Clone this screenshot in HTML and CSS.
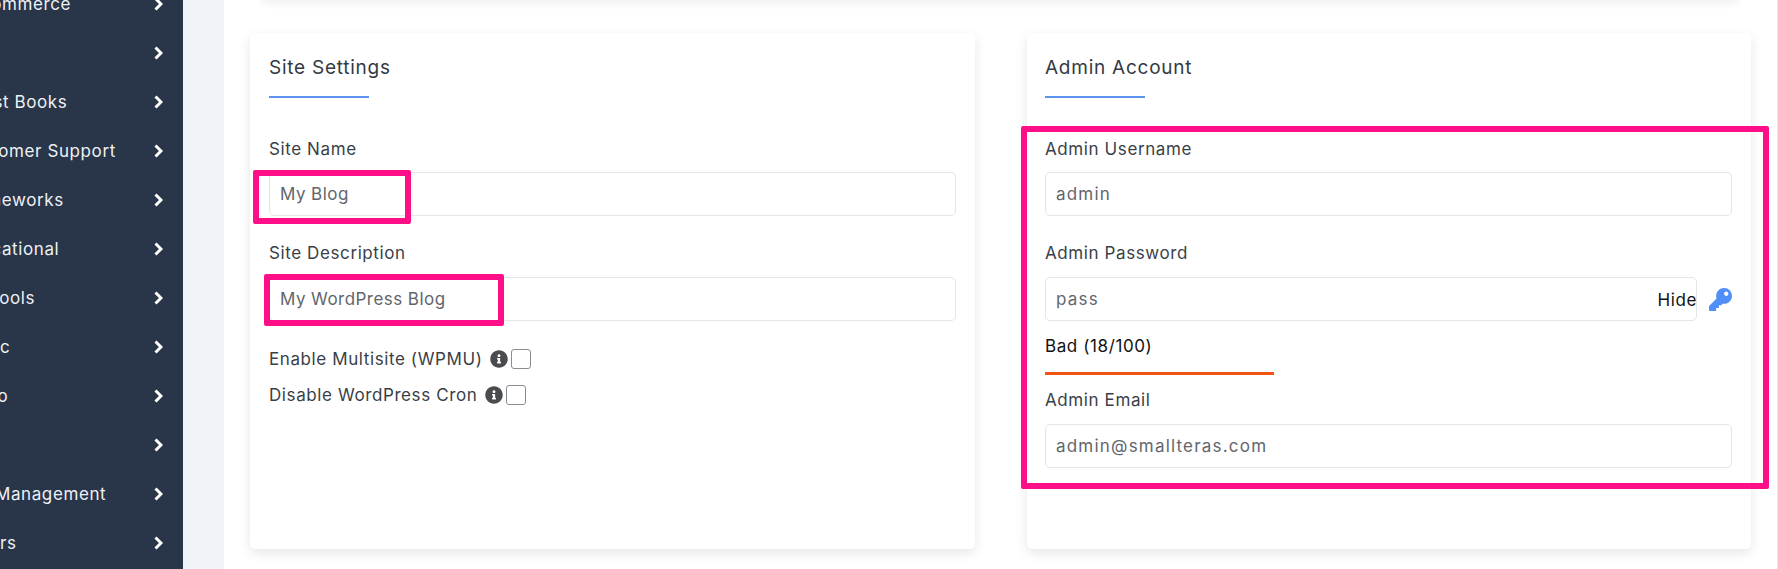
FILE: index.html
```html
<html>

<head>
  <meta charset="utf8">
  <title>Install WordPress</title>
  <link rel="stylesheet" href="styles.css">
</head>

<body>
  <nav class="sidebar">
    <ul>
      <li><span>E-Commerce</span><svg viewBox="0 0 9 14"><polyline points="1.5,1.5 7,7 1.5,12.5" /></svg></li>
      <li><span>ERP</span><svg viewBox="0 0 9 14"><polyline points="1.5,1.5 7,7 1.5,12.5" /></svg></li>
      <li><span>Guest Books</span><svg viewBox="0 0 9 14"><polyline points="1.5,1.5 7,7 1.5,12.5" /></svg></li>
      <li><span>Customer Support</span><svg viewBox="0 0 9 14"><polyline points="1.5,1.5 7,7 1.5,12.5" /></svg></li>
      <li><span>Frameworks</span><svg viewBox="0 0 9 14"><polyline points="1.5,1.5 7,7 1.5,12.5" /></svg></li>
      <li><span>Educational</span><svg viewBox="0 0 9 14"><polyline points="1.5,1.5 7,7 1.5,12.5" /></svg></li>
      <li><span>DB Tools</span><svg viewBox="0 0 9 14"><polyline points="1.5,1.5 7,7 1.5,12.5" /></svg></li>
      <li><span>Music</span><svg viewBox="0 0 9 14"><polyline points="1.5,1.5 7,7 1.5,12.5" /></svg></li>
      <li><span>Video</span><svg viewBox="0 0 9 14"><polyline points="1.5,1.5 7,7 1.5,12.5" /></svg></li>
      <li><span>RSS</span><svg viewBox="0 0 9 14"><polyline points="1.5,1.5 7,7 1.5,12.5" /></svg></li>
      <li><span>File Management</span><svg viewBox="0 0 9 14"><polyline points="1.5,1.5 7,7 1.5,12.5" /></svg></li>
      <li><span>Others</span><svg viewBox="0 0 9 14"><polyline points="1.5,1.5 7,7 1.5,12.5" /></svg></li>
    </ul>
  </nav>

  <main class="content">
    <div class="top-card"></div>
    <div class="cards">
      <section class="card">
        <h2>Site Settings</h2>
        <div class="rule"></div>
        <label class="field-label" for="site-name">Site Name</label>
        <input class="text-input" id="site-name" value="My Blog">
        <label class="field-label next" for="site-desc">Site Description</label>
        <input class="text-input" id="site-desc" value="My WordPress Blog">
        <div class="checks">
          <div class="check-row">
            <label for="multisite">Enable Multisite (WPMU)</label>
            <svg class="info" viewBox="0 0 512 512"><path d="M256 8C119.043 8 8 119.083 8 256c0 136.997 111.043 248 248 248s248-111.003 248-248C504 119.083 392.957 8 256 8zm0 110c23.196 0 42 18.804 42 42s-18.804 42-42 42-42-18.804-42-42 18.804-42 42-42zm56 254c0 6.627-5.373 12-12 12h-88c-6.627 0-12-5.373-12-12v-24c0-6.627 5.373-12 12-12h12v-64h-12c-6.627 0-12-5.373-12-12v-24c0-6.627 5.373-12 12-12h64c6.627 0 12 5.373 12 12v100h12c6.627 0 12 5.373 12 12v24z" /></svg>
            <input type="checkbox" id="multisite">
          </div>
          <div class="check-row">
            <label for="cron">Disable WordPress Cron</label>
            <svg class="info" viewBox="0 0 512 512"><path d="M256 8C119.043 8 8 119.083 8 256c0 136.997 111.043 248 248 248s248-111.003 248-248C504 119.083 392.957 8 256 8zm0 110c23.196 0 42 18.804 42 42s-18.804 42-42 42-42-18.804-42-42 18.804-42 42-42zm56 254c0 6.627-5.373 12-12 12h-88c-6.627 0-12-5.373-12-12v-24c0-6.627 5.373-12 12-12h12v-64h-12c-6.627 0-12-5.373-12-12v-24c0-6.627 5.373-12 12-12h64c6.627 0 12 5.373 12 12v100h12c6.627 0 12 5.373 12 12v24z" /></svg>
            <input type="checkbox" id="cron">
          </div>
        </div>
      </section>

      <section class="card card-admin">
        <h2>Admin Account</h2>
        <div class="rule"></div>
        <label class="field-label" for="admin-user">Admin Username</label>
        <input class="text-input" id="admin-user" value="admin">
        <label class="field-label next" for="admin-pass">Admin Password</label>
        <div class="pass-row">
          <div class="pass-box">
            <input class="text-input" id="admin-pass" value="pass">
            <span class="hide-toggle">Hide</span>
          </div>
          <svg class="key" viewBox="0 0 512 512"><path d="M512 176.001C512 273.203 433.202 352 336 352c-11.22 0-22.19-1.062-32.827-3.069l-24.012 27.014A23.999 23.999 0 0 1 261.223 384H224v40c0 13.255-10.745 24-24 24h-40v40c0 13.255-10.745 24-24 24H24c-13.255 0-24-10.745-24-24v-78.059c0-6.365 2.529-12.47 7.029-16.971l161.802-161.802C163.108 213.814 160 195.271 160 176 160 78.798 238.797.001 335.999 0 433.488-.001 512 78.511 512 176.001zM336 128c0 26.51 21.49 48 48 48s48-21.49 48-48-21.49-48-48-48-48 21.49-48 48z" /></svg>
        </div>
        <div class="strength">Bad (18/100)</div>
        <div class="strength-bar"></div>
        <label class="field-label email" for="admin-email">Admin Email</label>
        <input class="text-input" id="admin-email" value="admin@smallteras.com">
      </section>
    </div>
  </main>

  <div class="mark mark-name"></div>
  <div class="mark mark-desc"></div>
  <div class="mark mark-admin"></div>
</body>

</html>
```

FILE: styles.css
```css
html,
body {
  height: 100%;
}

body {
  margin: 0;
  display: flex;
  overflow: hidden;
  position: relative;
  background: #F0F4F9;
  color: #3A3F47;
  font: 17px/24px Inter, "Open Sans", sans-serif;
  letter-spacing: .6px;
}

.sidebar {
  flex: 0 0 183px;
  overflow: hidden;
  background: #293548;
  color: #EEF1F5;
}

.sidebar ul {
  list-style: none;
  margin: -21px 0 0 -41px;
  padding: 0;
}

.sidebar li {
  display: flex;
  align-items: center;
  justify-content: space-between;
  height: 49px;
  padding-right: 20px;
  white-space: nowrap;
}

.sidebar svg {
  width: 9px;
  height: 14px;
  fill: none;
  stroke: #FFF;
  stroke-width: 3;
}

.content {
  flex: 1;
  margin-left: 41px;
  padding: 0 26px;
  background: #FFF;
  border-right: 1px solid #E6E8EB;
}

.top-card {
  height: 0;
  margin: 0 14px 33px;
  box-shadow: 0 0 8px 2px rgba(0, 0, 0, .12);
}

.cards {
  display: grid;
  grid-template-columns: 725px 724px;
  gap: 52px;
}

.card {
  height: 516px;
  box-sizing: border-box;
  padding: 0 19px;
  background: #FFF;
  border-radius: 5px;
  box-shadow: 0 4px 12px rgba(0, 0, 0, .1);
}

.card-admin {
  padding-left: 18px;
}

h2 {
  margin: 0;
  height: 63px;
  font-size: 19px;
  font-weight: 400;
  letter-spacing: .75px;
  line-height: 70px;
  color: #333A44;
}

.rule {
  width: 100px;
  height: 2px;
  margin-bottom: 39px;
  background: #5B93EE;
}

.field-label {
  display: block;
  margin-bottom: 11px;
}

.field-label.next {
  margin-top: 25px;
  margin-bottom: 12px;
}

.field-label.email {
  margin-top: 13px;
  margin-bottom: 12px;
}

.text-input {
  display: block;
  box-sizing: border-box;
  width: 100%;
  height: 44px;
  padding: 0 10px;
  border: 1px solid #E3E5E8;
  border-radius: 5px;
  background: #FFF;
  color: #62666C;
  font: inherit;
  letter-spacing: .45px;
  outline: none;
}

.card-admin .text-input {
  letter-spacing: 1.2px;
}

.checks {
  margin-top: 20px;
}

.check-row {
  display: flex;
  align-items: center;
  height: 36px;
}

.info {
  width: 18px;
  height: 18px;
  margin-left: 8px;
  fill: #494B4F;
}

.check-row input {
  appearance: none;
  width: 20px;
  height: 20px;
  margin: 0 0 0 3px;
  border: 1px solid #8A8D91;
  border-radius: 3px;
  background: #FFF;
}

.pass-row {
  display: flex;
  align-items: center;
}

.pass-box {
  position: relative;
  width: 653px;
}

.hide-toggle {
  position: absolute;
  top: 11px;
  right: 0;
  color: #111;
}

.key {
  width: 23px;
  height: 23px;
  margin-left: 12px;
  fill: #4F8FF7;
}

.strength {
  margin-top: 13px;
  color: #111;
}

.strength-bar {
  width: 229px;
  height: 3px;
  margin-top: 14px;
  background: #F35412;
}

.mark {
  position: absolute;
  box-sizing: border-box;
  border: 6px solid #FF0F87;
  border-radius: 2px;
}

.mark-name {
  left: 253px;
  top: 170px;
  width: 158px;
  height: 54px;
}

.mark-desc {
  left: 264px;
  top: 274px;
  width: 240px;
  height: 52px;
}

.mark-admin {
  left: 1021px;
  top: 126px;
  width: 748px;
  height: 363px;
}
```
